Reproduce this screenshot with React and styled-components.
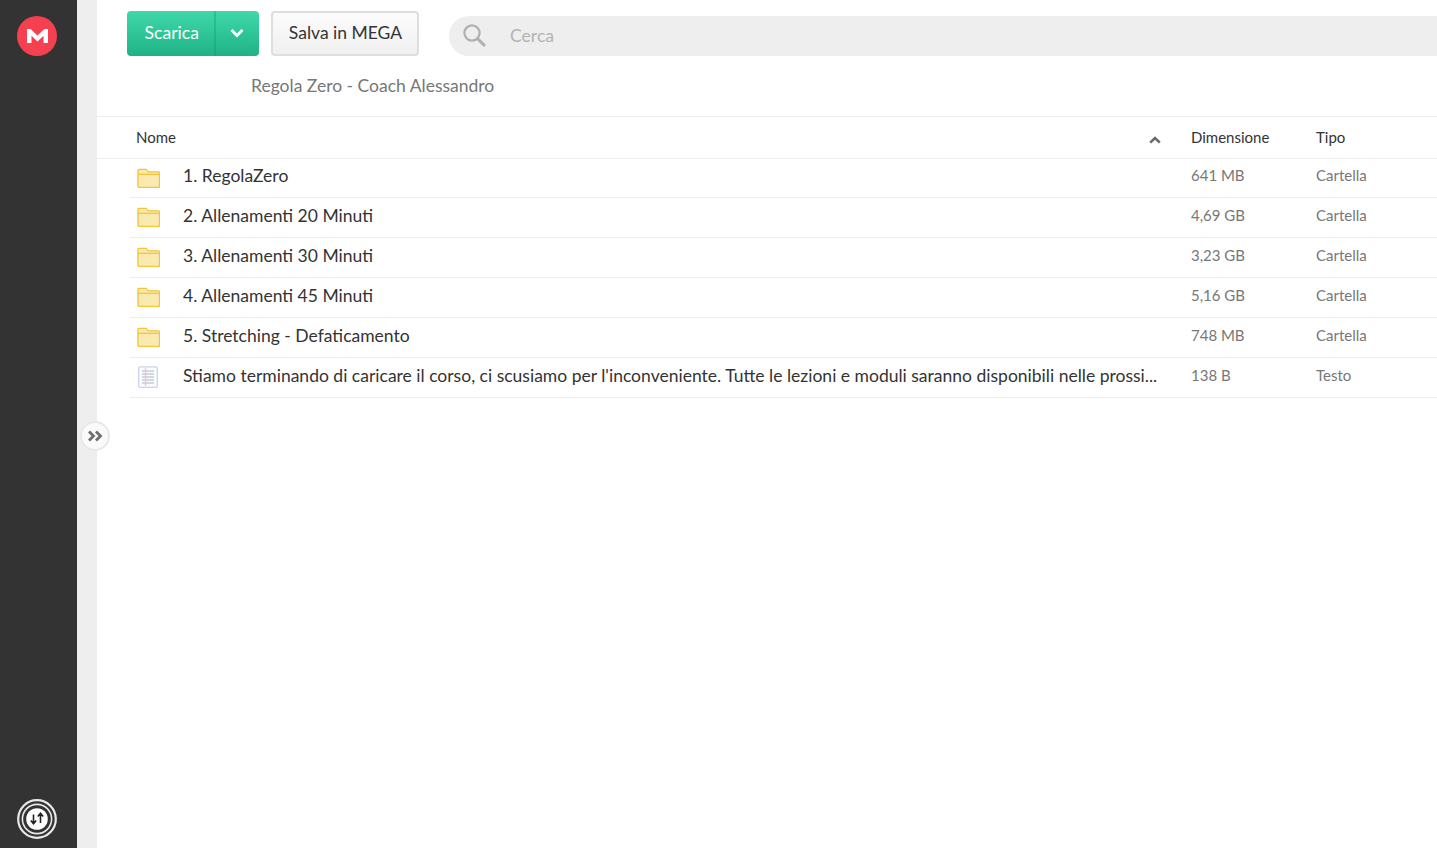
import React from 'react';
import styled, { createGlobalStyle } from 'styled-components';

const GlobalStyle = createGlobalStyle`
  html, body {
    margin: 0;
    padding: 0;
    height: 100%;
    background: #fff;
    font-family: Lato, "Open Sans", sans-serif;
  }
  #root { height: 100%; }
`;

const Page = styled.div`
  display: flex;
  height: 848px;
  overflow: hidden;
  position: relative;
`;

const Sidebar = styled.aside`
  width: 77px;
  flex: none;
  background: #333333;
  display: flex;
  flex-direction: column;
  align-items: center;
  justify-content: space-between;
  padding: 16px 3px 9px 0;
  box-sizing: border-box;
`;

const Gutter = styled.div`
  width: 20px;
  flex: none;
  background: #eeeeee;
`;

const Toggle = styled.button`
  position: absolute;
  left: 80px;
  top: 421px;
  width: 30px;
  height: 30px;
  padding: 0;
  border-radius: 50%;
  border: 2px solid #e8e8e8;
  background: #fafafa;
  display: flex;
  align-items: center;
  justify-content: center;
`;

const Main = styled.main`
  flex: 1;
  min-width: 0;
  background: #fff;
`;

const Toolbar = styled.div`
  display: flex;
  align-items: flex-start;
  height: 45px;
  padding: 11px 0 0 30px;
`;

const SplitButton = styled.div`
  width: 132px;
  height: 45px;
  display: flex;
  box-sizing: border-box;
  border-radius: 4px;
  background: linear-gradient(180deg, #3fd8aa 0%, #1fb384 100%);
  color: #fff;
  font-size: 17.6px;
  margin-right: 12px;
`;

const SplitLabel = styled.div`
  width: 89px;
  box-sizing: border-box;
  padding: 0 0 3px 17.5px;
  display: flex;
  align-items: center;
  border-right: 2px solid rgba(20, 150, 110, 0.35);
`;

const SplitArrow = styled.div`
  flex: 1;
  display: flex;
  align-items: center;
  justify-content: center;
  padding: 0 2px 2px 0;
`;

const SaveButton = styled.div`
  width: 148px;
  height: 45px;
  box-sizing: border-box;
  border: 2px solid #dedede;
  border-radius: 4px;
  background: linear-gradient(180deg, #fcfcfc 0%, #f0f0f0 100%);
  color: #333;
  font-size: 17.5px;
  display: flex;
  align-items: center;
  justify-content: center;
  padding: 0 0 3px 1px;
  margin-right: 30px;
`;

const Search = styled.div`
  flex: 1;
  height: 40px;
  margin-top: 5px;
  display: flex;
  align-items: center;
  background: #eeeeee;
  border-radius: 20px 0 0 20px;
  padding: 0 0 2px 13px;
  box-sizing: border-box;
  color: #b3b3b3;
  font-size: 17.6px;
  gap: 24px;
`;

const Title = styled.div`
  height: 61px;
  box-sizing: border-box;
  padding: 19px 0 0 154px;
  font-size: 17.5px;
  line-height: 22px;
  color: #777;
  border-bottom: 1px solid #eeeeee;
`;

const HeaderRow = styled.div`
  display: flex;
  align-items: center;
  height: 42px;
  padding: 0 0 1px 39px;
  box-sizing: border-box;
  font-size: 15px;
  color: #333;
  border-bottom: 1px solid #eeeeee;
`;

const HeaderName = styled.div`
  flex: 1;
  display: flex;
  align-items: center;
  justify-content: space-between;
  padding-right: 30px;
`;

const SortMark = styled.span`
  display: flex;
  padding-top: 5px;
`;

const SizeCell = styled.div`
  width: 125px;
  flex: none;
  font-size: 15px;
  color: ${(p) => (p.$head ? '#333' : '#777')};
`;

const TypeCell = styled.div`
  width: 121px;
  flex: none;
  font-size: 15px;
  color: ${(p) => (p.$head ? '#333' : '#777')};
`;

const List = styled.div`
  margin-left: 33px;
`;

const Row = styled.div`
  display: flex;
  align-items: center;
  height: ${(p) => (p.$first ? '39px' : '40px')};
  box-sizing: border-box;
  padding-bottom: 6px;
  border-bottom: 1px solid #eeeeee;
`;

const IconCell = styled.div`
  width: 53px;
  flex: none;
  display: flex;
  padding: 5px 0 0 ${(p) => (p.$file ? '8px' : '7px')};
  box-sizing: border-box;
`;

const Name = styled.div`
  flex: 1;
  min-width: 0;
  font-size: 17.53px;
  color: #333;
  white-space: nowrap;
  padding-top: ${(p) => (p.$first ? '0' : '2px')};
`;

const MegaLogo = () => (
  <svg width="40" height="40" viewBox="0 0 40 40">
    <circle cx="20" cy="20" r="20" fill="#f5404f" />
    <path d="M10 27V13h3.6L20.5 19.6 27.4 13H31v14h-4.5v-7.2l-6 5.8-6-5.8V27z" fill="#fff" />
  </svg>
);

const TransferIcon = () => (
  <svg width="40" height="40" viewBox="0 0 40 40">
    <circle cx="20" cy="20" r="18.8" fill="none" stroke="#e8e8e8" strokeWidth="2.2" />
    <circle cx="20" cy="20" r="14.6" fill="none" stroke="#e8e8e8" strokeWidth="1.6" />
    <circle cx="20" cy="20" r="10.8" fill="#fff" />
    <path d="M16.5 15.5v9M13.8 21.5l2.7 3.2 2.7-3.2M23.5 24v-9.5M20.8 17.5l2.7-3.2 2.7 3.2" fill="none" stroke="#222" strokeWidth="1.6" />
  </svg>
);

const Chevron = () => (
  <svg width="14" height="10" viewBox="0 0 14 10">
    <path d="M1.5 2l5.5 5.5L12.5 2" fill="none" stroke="#fff" strokeWidth="2.8" />
  </svg>
);

const SearchIcon = () => (
  <svg width="24" height="24" viewBox="0 0 24 24">
    <circle cx="10" cy="10" r="7.6" fill="none" stroke="#b0b0b0" strokeWidth="2.2" />
    <path d="M15.6 15.6L23 23" fill="none" stroke="#b0b0b0" strokeWidth="3" />
  </svg>
);

const SortUp = () => (
  <svg width="12" height="8" viewBox="0 0 12 8">
    <path d="M1.2 6.6L6 2l4.8 4.6" fill="none" stroke="#706a64" strokeWidth="2.6" />
  </svg>
);

const DoubleArrow = () => (
  <svg width="16" height="12" viewBox="0 0 16 12">
    <path d="M2 1.5L6.5 6 2 10.5M9 1.5L13.5 6 9 10.5" fill="none" stroke="#6f6f6f" strokeWidth="2.8" />
  </svg>
);

const FolderIcon = () => (
  <svg width="23" height="22" viewBox="0 0 24 22">
    <path d="M1 3.2C1 2.5 1.5 2 2.2 2h7.3l2.3 2.6h10.4c.7 0 1.3.6 1.3 1.3v13.6c0 .7-.6 1.3-1.3 1.3H2.3c-.7 0-1.3-.6-1.3-1.3z" fill="#fbeab0" stroke="#f3c53a" strokeWidth="1.4" />
    <path d="M1 7.2h22.8" fill="none" stroke="#f3c53a" strokeWidth="1.4" />
  </svg>
);

const TextFileIcon = () => (
  <svg width="20" height="22" viewBox="0 0 20 22">
    <rect x="0.7" y="0.8" width="18.6" height="20.5" rx="1.6" fill="#fbfcff" stroke="#c9d3ec" strokeWidth="1.3" />
    <path d="M4 5h12M4 8h12M4 11h12M4 14h12M4 17h12" stroke="#aab3bd" strokeWidth="1" />
    <path d="M7.5 2v18" stroke="#f2c4cc" strokeWidth="1.4" />
  </svg>
);

const rows = [
  { name: '1. RegolaZero', size: '641 MB', type: 'Cartella' },
  { name: '2. Allenamenti 20 Minuti', size: '4,69 GB', type: 'Cartella' },
  { name: '3. Allenamenti 30 Minuti', size: '3,23 GB', type: 'Cartella' },
  { name: '4. Allenamenti 45 Minuti', size: '5,16 GB', type: 'Cartella' },
  { name: '5. Stretching - Defaticamento', size: '748 MB', type: 'Cartella' },
  {
    name: "Stiamo terminando di caricare il corso, ci scusiamo per l'inconveniente. Tutte le lezioni e moduli saranno disponibili nelle prossi...",
    size: '138 B',
    type: 'Testo',
    file: true,
  },
];

const App = () => (
  <>
    <GlobalStyle />
    <Page>
      <Sidebar>
        <MegaLogo />
        <TransferIcon />
      </Sidebar>
      <Gutter />
      <Toggle>
        <DoubleArrow />
      </Toggle>
      <Main>
        <Toolbar>
          <SplitButton>
            <SplitLabel>Scarica</SplitLabel>
            <SplitArrow>
              <Chevron />
            </SplitArrow>
          </SplitButton>
          <SaveButton>Salva in MEGA</SaveButton>
          <Search>
            <SearchIcon />
            Cerca
          </Search>
        </Toolbar>
        <Title>Regola Zero - Coach Alessandro</Title>
        <HeaderRow>
          <HeaderName>
            Nome
            <SortMark>
              <SortUp />
            </SortMark>
          </HeaderName>
          <SizeCell $head>Dimensione</SizeCell>
          <TypeCell $head>Tipo</TypeCell>
        </HeaderRow>
        <List>
          {rows.map((row, i) => (
            <Row key={row.name} $first={i === 0}>
              <IconCell $file={row.file}>{row.file ? <TextFileIcon /> : <FolderIcon />}</IconCell>
              <Name $first={i === 0}>{row.name}</Name>
              <SizeCell>{row.size}</SizeCell>
              <TypeCell>{row.type}</TypeCell>
            </Row>
          ))}
        </List>
      </Main>
    </Page>
  </>
);

export default App;
